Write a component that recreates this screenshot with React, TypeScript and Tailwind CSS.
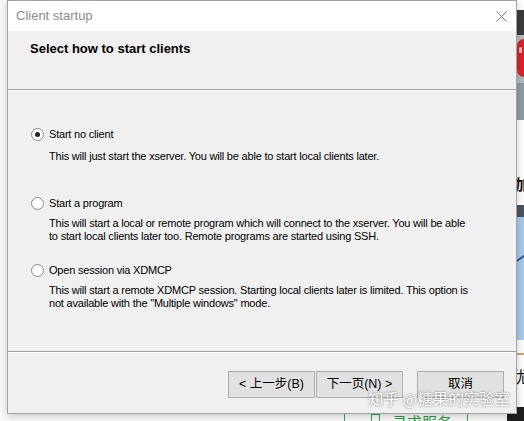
const ui = "font-['Liberation_Sans','Arial',sans-serif]";
const cjk = "font-['Liberation_Sans','Noto_Sans_CJK_SC',sans-serif]";

function Radio({ checked }: { checked?: boolean }) {
  return (
    <span className="flex h-[13px] w-[13px] shrink-0 items-center justify-center rounded-full border border-[#8a8a8a] bg-white">
      {checked && <span className="h-[5px] w-[5px] rounded-full bg-[#222]" />}
    </span>
  );
}

function Option({
  label,
  lines,
  checked,
  descGap,
  className,
}: {
  label: string;
  lines: string[];
  checked?: boolean;
  descGap: string;
  className?: string;
}) {
  return (
    <div className={className}>
      <div className="flex h-[14px] items-center gap-[5px] pl-[23px]">
        <Radio checked={checked} />
        <span className="text-[11px] leading-[14px] tracking-[-0.2px] text-black">{label}</span>
      </div>
      <div className={`${descGap} pl-[41px] text-[11px] leading-[13px] tracking-[-0.2px] text-black`}>
        {lines.map((l) => (
          <div key={l} className="whitespace-nowrap">
            {l}
          </div>
        ))}
      </div>
    </div>
  );
}

function Separator() {
  return (
    <div>
      <div className="h-px bg-[#a0a0a0]" />
      <div className="h-px bg-white" />
    </div>
  );
}

function Button({ children }: { children: React.ReactNode }) {
  return (
    <button className={`${cjk} h-[27px] w-[87px] border border-[#adadad] bg-[#e1e1e1] text-[12.5px] text-black`}>
      {children}
    </button>
  );
}

function Backdrop() {
  return (
    <>
      {/* page behind the window, right edge */}
      <div className="absolute right-0 top-0 flex h-full w-[8px] flex-col overflow-hidden bg-white">
        <div className="h-[10px]" />
        <div className="h-[25px] bg-[#3c3c3c]" />
        <div className="relative h-[85px] bg-[#b4bcc0]">
          <div className="absolute left-[1px] top-[4px] h-[38px] w-[7px] rounded-l-full bg-[#d8262a]" />
          <div className="absolute left-[3px] top-[12px] h-[6px] w-[3px] rounded-full bg-[#f4c0c0]" />
          <div className="absolute left-0 top-[48px] h-[37px] w-[8px] bg-[#8f9ea8]" />
        </div>
        <div className="h-[55px]" />
        <div className="-ml-px h-[18px] overflow-hidden text-[15px] font-bold leading-[18px] text-[#111] font-['Noto_Sans_CJK_SC',sans-serif]">
          加
        </div>
        <div className="h-[12px]" />
        <div className="h-[12px] bg-[#4a5560]" />
        <div className="relative h-[123px] bg-[#a7cbea]">
          <div className="absolute left-0 top-[40px] h-[2px] w-[10px] rotate-[-35deg] bg-[#2d5a9a]" />
        </div>
        <div className="h-[13px]" />
        <div className="h-[2px] bg-[#d9a25c]" />
        <div className="h-[10px]" />
        <div className="-ml-[4px] h-[22px] overflow-hidden text-[16px] leading-[22px] text-[#111] font-['Noto_Sans_CJK_SC',sans-serif]">
          优
        </div>
        <div className="h-[20px]" />
        <div className="flex-1 bg-[#1e1e1e]" />
      </div>
      {/* page behind the window, bottom edge */}
      <div className="absolute left-[344px] top-[408px] flex h-[20px] w-[124px] items-start gap-[12px] border-x border-[#3ea055] pl-[26px] pt-[6px]">
        <span className="h-[12px] w-[9px] border border-[#3ea055]" />
        <span className="mt-[-2px] text-[15px] leading-[20px] text-[#2a9a45] font-['Noto_Sans_CJK_SC',sans-serif]">
          寻求服务
        </span>
      </div>
      <div className="absolute left-[507px] top-[412px] h-[9px] w-[17px] bg-[#1e1e1e]" />
    </>
  );
}

export default function App() {
  return (
    <div className={`${ui} relative h-[421px] w-[524px] overflow-hidden bg-[#fafafa]`}>
      <Backdrop />

      <div className="absolute left-[7px] top-0 flex h-[414px] w-[510px] flex-col border border-[#a3a3a3] bg-[#f0f0f0] shadow-[0_2px_8px_rgba(0,0,0,0.22)]">
        <div className="flex h-[30px] items-center justify-between bg-white pl-[8px] pr-[9px]">
          <span className="text-[13px] text-[#8c8c8c]">Client startup</span>
          <svg width="11" height="11" viewBox="0 0 11 11" className="text-[#7a7a7a]">
            <path d="M0.5 0.5 L10.5 10.5 M10.5 0.5 L0.5 10.5" stroke="currentColor" strokeWidth="1" />
          </svg>
        </div>

        <div className="h-[58px] pl-[22px] pt-[11px]">
          <h1 className="text-[13px] font-bold leading-[14px] text-black">Select how to start clients</h1>
        </div>
        <Separator />

        <div className="flex-1 pt-[36px]">
          <Option
            checked
            label="Start no client"
            descGap="mt-[9px]"
            lines={["This will just start the xserver. You will be able to start local clients later."]}
          />
          <Option
            className="mt-[33px]"
            label="Start a program"
            descGap="mt-[7px]"
            lines={[
              "This will start a local or remote program which will connect to the xserver. You will be able",
              "to start local clients later too. Remote programs are started using SSH.",
            ]}
          />
          <Option
            className="mt-[20px]"
            label="Open session via XDMCP"
            descGap="mt-[7px]"
            lines={[
              "This will start a remote XDMCP session. Starting local clients later is limited. This option is",
              'not available with the "Multiple windows" mode.',
            ]}
          />
        </div>
        <Separator />

        <div className="flex h-[60px] items-start justify-end pr-[12px] pt-[18px]">
          <div className="flex gap-px">
            <Button>&lt; 上一步(B)</Button>
            <Button>下一页(N) &gt;</Button>
          </div>
          <div className="ml-[14px]">
            <Button>取消</Button>
          </div>
        </div>
      </div>

      <div className="absolute left-[368px] top-[387px] whitespace-nowrap text-[15.5px] leading-[22px] text-white [text-shadow:0_0_2px_rgba(0,0,0,0.6)] font-['Noto_Sans_CJK_SC',sans-serif]">
        知乎 @糖果的实验室
      </div>
    </div>
  );
}
